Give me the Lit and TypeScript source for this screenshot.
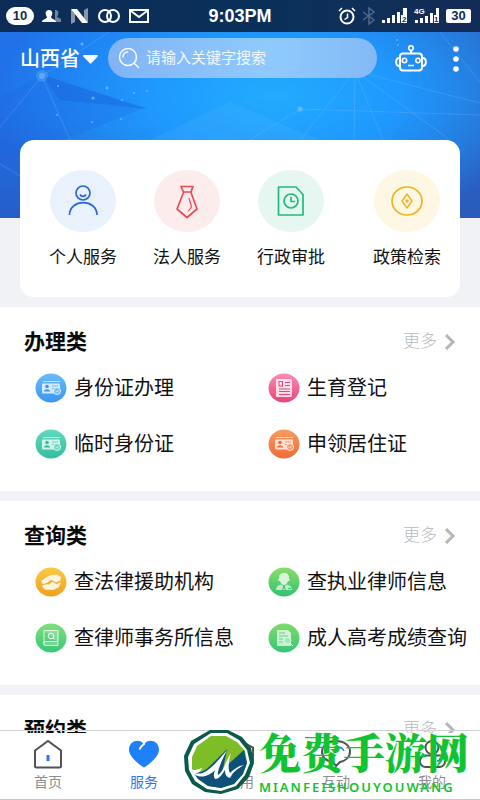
import { LitElement, html, css, svg } from "lit";
import { customElement } from "lit/decorators.js";

type Item = { label: string; icon: string; from: string; to: string };

const groups: { title: string; items: Item[] }[] = [
  {
    title: "办理类",
    items: [
      { label: "身份证办理", icon: "id", from: "#6cbcf8", to: "#3a96ef" },
      { label: "生育登记", icon: "form", from: "#fb8bb4", to: "#ea4477" },
      { label: "临时身份证", icon: "id", from: "#63d8be", to: "#35bd9f" },
      { label: "申领居住证", icon: "id", from: "#fa9a62", to: "#ee6c38" },
    ],
  },
  {
    title: "查询类",
    items: [
      { label: "查法律援助机构", icon: "hands", from: "#f9cb45", to: "#f0a01e" },
      { label: "查执业律师信息", icon: "lawyer", from: "#8ade66", to: "#32c176" },
      { label: "查律师事务所信息", icon: "book", from: "#7fe07a", to: "#36c878" },
      { label: "成人高考成绩查询", icon: "paper", from: "#7edb68", to: "#37c678" },
    ],
  },
  { title: "预约类", items: [] },
];

const glyphs: Record<string, unknown> = {
  id: svg`<path d="M8 8.500h17" stroke="#fff" opacity=".6"/>
    <rect x="7" y="10.500" width="18" height="10" rx="1" fill="#fff" opacity=".75"/>
    <circle cx="12" cy="13.500" r="1.800" fill="var(--to)"/>
    <path d="M9 18.500c0-3 6-3 6 0z" fill="var(--to)"/>
    <path d="M17 13h6M17 15.500h3" stroke="var(--to)" opacity=".6"/>
    <circle cx="22" cy="18" r="3.500" fill="var(--from)" stroke="#fff" stroke-width=".8"/>
    <path d="M20.500 18l1.200 1 2-2" stroke="#fff" stroke-width=".8" fill="none"/>`,
  form: svg`<rect x="8" y="6" width="16" height="18" rx="1" fill="#fff" opacity=".8"/>
    <g stroke="var(--to)" fill="none"><rect x="11" y="8.500" width="3.500" height="4.500"/>
    <path d="M17 9.500h5M17 12.500h5M11 16h11M11 18.500h11M11 21.500h11"/></g>`,
  hands: svg`<path d="M6 14l5-3.500 5-2.500 6-.5 4 2.500-1 4.500-4 1.500-5-3-4 3-4 1.500z" fill="#fff" opacity=".85"/>
    <path d="M26 15.500l-2 4.500-6 3-8-.5-3-3 2-2.500 5 .5 3.500-3 4 2.500 4-1.500z" fill="#fff" opacity=".85"/>
    <path d="M8 17.500l5-1 3-3 5 2.500 4-2" fill="none" stroke="var(--to)" stroke-width=".8"/>`,
  lawyer: svg`<path d="M16 6c-3.500 0-5 2-5 5l-1 3h2c1 2.500 2 4 4 4s3-1.500 4-4h2l-1-3c0-3-1.500-5-5-5z" fill="#fff" opacity=".75"/>
    <path d="M8 23c0-3 2-5 5-5.500l3 2 3-2c3 .5 5 2.500 5 5.500z" fill="#fff" opacity=".65"/>
    <path d="M14.500 23l1.500-4 1.500 4M20 21.500h3" fill="none" stroke="var(--to)"/>`,
  book: svg`<path d="M9 7.500h14v15H10.500a1.800 1.800 0 0 1 0-4H22M9 7.500v13" fill="#fff" fill-opacity=".25" stroke="#fff" opacity=".85"/>
    <circle cx="16" cy="13" r="2.800" fill="none" stroke="#fff"/><path d="M18 15l1.500 1.500" stroke="#fff"/>`,
  paper: svg`<path d="M9 7h11l3 3v13H9z" fill="#fff" opacity=".7"/>
    <path d="M11 10h6M11 13h9M11 16h4M11 19h4" stroke="var(--to)" opacity=".7"/>
    <circle cx="19.500" cy="17.500" r="3.500" fill="#a8e8b4" stroke="#fff" stroke-width=".6"/><path d="M22 20l3 3" stroke="#fff"/>`,
};

const services = [
  {
    label: "个人服务",
    bg: "#e9f1fd",
    color: "#2b66d9",
    art: svg`<circle cx="33" cy="23" r="7"/><path d="M30 24.500a3.400 3.400 0 0 0 6 0M19.500 45c0-16.500 27.500-16.500 27.500 0"/>`,
  },
  {
    label: "法人服务",
    bg: "#fdecec",
    color: "#e84b57",
    art: svg`<path d="M27 16.500h12l-2 5.500h-7.500zM29.500 22.500L23 39l10 8.500L43 39l-6-16.500"/><path d="M35 28l2.500 9L34 41.500" stroke-width="1.200"/>`,
  },
  {
    label: "行政审批",
    bg: "#e5f7f0",
    color: "#22ba7c",
    art: svg`<path d="M20.500 17H38l7 7.500v20.500H20.500z"/><circle cx="33" cy="31" r="7"/><path d="M33 27v4.500h4"/>`,
  },
  {
    label: "政策检索",
    bg: "#fdf7e3",
    color: "#efb31c",
    art: svg`<ellipse cx="33" cy="31" rx="15" ry="14"/><path d="M33 24l5 7-5 7-5-7z" stroke-width="1.400"/><circle cx="33" cy="31" r=".8"/>`,
  },
];

const tabs = [
  {
    label: "首页",
    art: svg`<path d="M3 11.500L16 2l13 9.500V27a1.500 1.500 0 0 1-1.500 1.500h-23A1.500 1.500 0 0 1 3 27z" fill="none" stroke="#505258" stroke-width="2"/><path d="M16 16v6" stroke="#2878f0" stroke-width="3"/>`,
  },
  {
    label: "服务",
    active: true,
    art: svg`<path d="M16 28.500C13 27 1 18 1 11 1 1 13-1 16 6c3-7 15-5 15 5 0 7-12 16-15 17.500z" fill="#1f80fb"/><path d="M11.500 10.500c1-3 3-4.500 5-6" fill="none" stroke="#fff" stroke-width="2"/>`,
  },
  {
    label: "应用",
    art: svg`<path d="M16 2l13 6.500v13L16 28 3 21.500v-13z" fill="none" stroke="#505258" stroke-width="2"/>`,
  },
  {
    label: "互动",
    art: svg`<path d="M16 2c8 0 14 4.500 14 10.500S25 22 20 23l-4 4-3-4C6 22 2 18 2 12.500S8 2 16 2z" fill="none" stroke="#505258" stroke-width="2"/><path d="M18 8c3 0 5 2 6 4" fill="none" stroke="#2878f0" stroke-width="1.500"/>`,
  },
  {
    label: "我的",
    art: svg`<g fill="none" stroke="#505258" stroke-width="2"><circle cx="16" cy="8.500" r="6.500"/><rect x="4" y="16.500" width="25" height="11.500" rx="5.500"/></g><path d="M21 22c2 0 3-1 3-3" fill="none" stroke="#2878f0" stroke-width="1.500"/>`,
  },
];

@customElement("status-bar")
class StatusBar extends LitElement {
  static styles = css`
    :host { display: grid; grid-template-columns: 1fr auto 1fr; align-items: center; height: 32px; background: linear-gradient(90deg, #0d2c58, #0a315a 55%, #142c57); color: #fff; }
    .left, .right { display: flex; align-items: center; }
    .left { padding-left: 6px; gap: 8px; }
    .right { justify-content: flex-end; padding-right: 9px; gap: 6px; }
    .count { width: 28px; line-height: 18px; border-radius: 9px; background: #fff; color: #0d2c58; font-size: 13px; font-weight: 700; text-align: center; }
    .clock { font-size: 18px; font-weight: 700; line-height: 32px; }
    .battery { width: 25px; line-height: 14px; border-radius: 2px; background: #fff; color: #0d2c58; font-size: 13px; font-weight: 700; text-align: center; }
    .cell { font: 700 8px "Liberation Sans", sans-serif; }
  `;
  render() {
    return html`
      <div class="left">
        <span class="count">10</span>
        <svg width="20" height="16" viewBox="0 0 20 16"><path d="M13 2c3 0 4 2 3 5l-1 2 4 2v3h-6z" fill="#74849c"/><path d="M7 2c4 0 4 4 2 7 0 2 5 2 5 5H0c0-3 5-3 5-5C3 6 3 2 7 2z" fill="#fff"/></svg>
        <svg width="19" height="18" viewBox="0 0 19 18"><path d="M1 3l4-1v13l-4 2zM14 3l4-2v14l-4 1z" fill="#8796ab"/><path d="M1 2h6l11 14h-6z" fill="#fff"/></svg>
        <svg width="24" height="16" viewBox="0 0 24 16" fill="none" stroke="#fff" stroke-width="2"><circle cx="8" cy="8" r="6"/><circle cx="16" cy="8" r="6"/></svg>
        <svg width="20" height="16" viewBox="0 0 20 16" fill="none" stroke="#fff" stroke-width="2"><rect x="1" y="2" width="18" height="12"/><path d="M2 3l8 6 8-6"/></svg>
      </div>
      <time class="clock">9:03PM</time>
      <div class="right">
        <svg width="18" height="18" viewBox="0 0 18 18" fill="none" stroke="#fff" stroke-width="2"><circle cx="9" cy="10" r="6.500"/><path d="M9.500 6.500v4l-3 2M1 4l3-3M17 4l-3-3" stroke-width="1.500"/></svg>
        <svg width="14" height="18" viewBox="0 0 14 18" fill="none" stroke="#50698c" stroke-width="1.500"><path d="M1 5l11 8-5 4V1l5 4-11 8"/></svg>
        <svg width="26" height="18" viewBox="0 0 26 18" fill="#fff"><path d="M0 13h3v3H0zM5 11h3v5H5zM10 8h3v8h-3zM15 5h3v11h-3zM21 1h4v15h-6V8h2z"/><text class="cell" x="20" y="15" fill="#0d2c58">2</text></svg>
        <svg width="26" height="18" viewBox="0 0 26 18" fill="#fff"><path d="M1 13h3v3H1zM6 11h3v5H6zM11 9h3v7h-3zM16 6h3v10h-3zM22 1h3v15h-5V8h2z"/><text class="cell" x="0" y="7">4G</text><text class="cell" x="20" y="15" fill="#0d2c58">1</text></svg>
        <span class="battery">30</span>
      </div>`;
  }
}

@customElement("service-group")
class ServiceGroup extends LitElement {
  static properties = { heading: {}, items: { attribute: false } };
  declare heading: string;
  declare items: Item[];
  static styles = css`
    :host { display: block; background: #fff; padding: 20px 0 19px; min-height: 145px; }
    .head { display: flex; justify-content: space-between; align-items: center; height: 30px; padding: 0 24px; }
    .title { margin: 0; font-size: 21px; line-height: 30px; font-weight: 700; color: #0b0b0b; }
    .more { display: flex; align-items: center; gap: 7px; font-size: 17px; font-weight: 300; line-height: 30px; color: #b7babf; text-decoration: none; }
    .list { display: grid; grid-template-columns: 11fr 10fr; margin: 3px 0 0; padding: 0 0 0 35px; list-style: none; }
    .item { display: flex; align-items: center; gap: 7px; height: 56px; color: #111; font-size: 20px; line-height: 28px; text-decoration: none; white-space: nowrap; }
    .icon { flex: none; }
  `;
  render() {
    return html`
      <div class="head">
        <h2 class="title">${this.heading}</h2>
        <a class="more" href="#more">更多
          <svg width="12" height="16" viewBox="0 0 12 16" fill="none" stroke="#b4b6ba" stroke-width="3"><path d="M2 1l7 7-7 7"/></svg>
        </a>
      </div>
      <ul class="list">
        ${this.items.map(
          (it, i) => html`<li><a class="item" href="#item">
            <svg class="icon" width="32" height="30" viewBox="0 0 32 30" style="--from:${it.from};--to:${it.to}">
              <defs><linearGradient id="g${i}" x2="0" y2="1"><stop stop-color=${it.from}/><stop offset="1" stop-color=${it.to}/></linearGradient></defs>
              <ellipse cx="16" cy="15" rx="15.500" ry="14.500" fill="url(#g${i})"/>${glyphs[it.icon]}
            </svg><span>${it.label}</span></a></li>`
        )}
      </ul>`;
  }
}

@customElement("app-root")
class AppRoot extends LitElement {
  static styles = css`
    :host { display: flex; flex-direction: column; position: relative; height: 100vh; overflow: hidden; background: #f1f2f6; font-family: "Liberation Sans", "Noto Sans CJK SC", sans-serif; }
    .content { flex: 1; min-height: 0; overflow-y: auto; scrollbar-width: none; }
    .hero { position: relative; padding-bottom: 10px; }
    .sky { position: absolute; top: 0; left: 0; width: 100%; height: 218px; background: radial-gradient(ellipse 58% 62% at 57% 44%, #22acff 0%, #1f98fd 45%, rgba(31, 130, 245, 0) 100%), linear-gradient(180deg, rgba(40, 80, 180, 0) 50%, rgba(40, 80, 180, 0.6)), linear-gradient(90deg, #2171e8, #1f7bf0 50%, #2c68c6); }
    .top { position: relative; }
    .bar { display: flex; align-items: center; height: 54px; padding: 0 11px 0 20px; }
    .region { display: flex; align-items: center; gap: 3px; width: 88px; padding: 0; border: 0; background: none; color: #fff; font: 500 20px/28px "Liberation Sans", "Noto Sans CJK SC", sans-serif; white-space: nowrap; }
    .search { display: flex; flex: 1; align-items: center; gap: 6px; min-width: 0; height: 40px; margin-bottom: 2px; padding: 0 10px; box-sizing: border-box; border-radius: 20px; background: linear-gradient(90deg, #81b3f5, #8fcafd 60%, #83b9f6); }
    .field { flex: 1; min-width: 0; padding: 0; border: 0; outline: 0; background: none; color: #fff; font: 15px/20px "Liberation Sans", "Noto Sans CJK SC", sans-serif; }
    .field::placeholder { color: #fff; opacity: 0.9; }
    .tool { display: flex; justify-content: center; padding: 0; border: 0; background: none; }
    .robot { margin: 0 21px 0 17px; }
    .card { display: flex; gap: 36px; margin: 54px 20px 0; padding: 30px 19px 27px 29px; border-radius: 14px; background: #fff; }
    .service { display: flex; flex-direction: column; align-items: center; gap: 14px; color: #111; font-size: 17px; line-height: 24px; text-decoration: none; white-space: nowrap; }
    .service:last-child { margin-left: auto; }
    .groups { display: grid; gap: 10px; }
    .tabs { display: grid; grid-template-columns: repeat(5, 1fr); position: relative; margin-top: -3px; padding-top: 8px; border-top: 1px solid #cfd0d4; border-bottom: 1px solid #c8c8c8; height: 60px; background: linear-gradient(transparent 2px, #fff 2px); }
    .tab { display: flex; flex-direction: column; align-items: center; gap: 3px; color: #8b8d91; font-size: 14px; line-height: 20px; text-decoration: none; }
    .active { color: #2878f0; }
    .mark { position: absolute; right: 11px; bottom: 4px; display: flex; align-items: center; gap: 4px; color: #0fc332; pointer-events: none; }
    .words { display: flex; flex-direction: column; gap: 4px; }
    .brand { font: 900 42px/46px "Noto Serif CJK SC", "Noto Sans CJK SC", serif; white-space: nowrap; }
    .latin { font: 600 13px/18px "Noto Sans", "Open Sans", sans-serif; letter-spacing: 2px; }
  `;
  render() {
    return html`
      <main class="content">
        <header class="hero">
          <svg class="sky" viewBox="0 0 480 218" preserveAspectRatio="none">
            <path d="M0 97l42-22 103 33L0 165z" fill="#1d5fdd" opacity=".2"/>
            <path d="M42 75l106 34-88-9z" fill="#1857d0" opacity=".28"/>
            <path d="M150 140l80-38 90 38z" fill="#6bbcff" opacity=".14"/>
            <path d="M0 127L42 76l28 64M42 76l70-46M0 164l20 12M240 146l60-37 180 6M355 71l28 69M355 71l-1 69M355 71l125 32M355 71l95 69M300 140l55-69M440 32l40 50" fill="none" stroke="#79baff" stroke-width=".7" opacity=".4"/>
            <circle cx="42" cy="76" r="6" fill="#6fb9ff" opacity=".3"/>
            <circle cx="42" cy="76" r="3" fill="#6fb9ff" opacity=".6"/>
            <g fill="#78c0ff" opacity=".75"><circle cx="82" cy="44" r="1.500"/><circle cx="107" cy="88" r="1.500"/><circle cx="93" cy="98" r="1.500"/><circle cx="58" cy="86" r="1"/><circle cx="122" cy="100" r="1"/><circle cx="134" cy="93" r="1"/><circle cx="147" cy="91" r="1"/><circle cx="92" cy="122" r="1"/><circle cx="57" cy="115" r="1"/><circle cx="121" cy="119" r="1"/><circle cx="300" cy="109" r="2.500"/><circle cx="356" cy="71" r="2"/><circle cx="397" cy="40" r="1"/><circle cx="398" cy="45" r="1"/></g>
          </svg>
          <div class="top">
            <status-bar></status-bar>
            <div class="bar">
              <button class="region">山西省
                <svg width="15" height="9" viewBox="0 0 15 9"><path d="M1 0h13a1 1 0 0 1 .7 1.500L8.300 8.300a1 1 0 0 1-1.500 0L.3 1.500A1 1 0 0 1 1 0z" fill="#fff"/></svg>
              </button>
              <label class="search">
                <svg width="22" height="22" viewBox="0 0 22 22" fill="none" stroke="#fff" stroke-width="1.500" stroke-linecap="round"><circle cx="10" cy="10" r="8.500"/><path d="M16.500 16.500l4 4M5 10c0-3 2-5 4.500-5"/></svg>
                <input class="field" type="search" placeholder="请输入关键字搜索" aria-label="搜索" />
              </label>
              <button class="tool robot" aria-label="助手">
                <svg width="34" height="30" viewBox="0 0 34 30" fill="none" stroke="#fff" stroke-width="2"><circle cx="17" cy="4" r="2.300" stroke-width="1.600"/><path d="M17 6.500V10"/><rect x="6" y="9.500" width="22" height="17" rx="3"/><path d="M5.500 14C1 14 1 22 5.500 22M28.500 14c4.500 0 4.500 8 0 8"/><g stroke-width="1.500"><circle cx="10.500" cy="16.500" r="2.200"/><circle cx="24" cy="16.500" r="2.200"/><path d="M14 21.500h6"/></g></svg>
              </button>
              <button class="tool" aria-label="菜单">
                <svg width="20" height="28" viewBox="0 0 20 28" fill="#fff"><circle cx="7" cy="4" r="2.800"/><circle cx="7" cy="14" r="2.800"/><circle cx="7" cy="24" r="2.800"/></svg>
              </button>
            </div>
            <nav class="card">
              ${services.map(
                (s) => html`<a class="service" href="#service">
                  <svg width="68" height="62" viewBox="-1 0 68 62"><ellipse cx="33" cy="31" rx="33" ry="31" fill=${s.bg}/><g fill="none" stroke=${s.color} stroke-width="1.700" stroke-linejoin="round">${s.art}</g></svg>
                  <span>${s.label}</span></a>`
              )}
            </nav>
          </div>
        </header>
        <div class="groups">
          ${groups.map((g) => html`<service-group .heading=${g.title} .items=${g.items}></service-group>`)}
        </div>
      </main>
      <nav class="tabs">
        ${tabs.map(
          (t) => html`<a class="tab ${t.active ? "active" : ""}" href="#tab"><svg width="32" height="30" viewBox="0 0 32 30">${t.art}</svg><span>${t.label}</span></a>`
        )}
      </nav>
      <div class="mark">
        <svg width="72" height="68" viewBox="0 0 72 68">
          <path d="M27 2h18l14 7 9 11 3 15-5 14-11 12-17 5-16-2-13-8-7-13-1-15 7-15z" fill="#0b584c"/>
          <path d="M28 5h16l12 7 8 10 3 13-5 12-9 11-15 5-14-2-12-8-6-11-1-13 6-13z" fill="#fff"/>
          <path d="M28 8h15l11 6 8 9 2 12-4 11-9 10-13 4-13-2-10-7-6-10v-12l5-11z" fill="#7dbd28"/>
          <path d="M9 43c6 3 12 1 17-4l18-18-4 20 21-19 3 13-4 11-9 10-13 4-13-2-10-7z" fill="#0d5078"/>
          <path d="M7 40c4 4 8 1 12 0-1 4-4 5-7 5 9 3 17-5 32-23-5 10-10 21-9 25 6-4 7-13 13-22-3 10-3 17-1 20 4-4 8-7 14-8-7 4-11 7-14 13-4-1-5-4-5-8-4 6-6 9-10 9-2-3-1-6 0-9-6 6-14 9-21 4z" fill="#fff"/>
        </svg>
        <div class="words"><span class="brand">免费手游网</span><span class="latin">MIANFEISHOUYOUWANG</span></div>
      </div>`;
  }
}
